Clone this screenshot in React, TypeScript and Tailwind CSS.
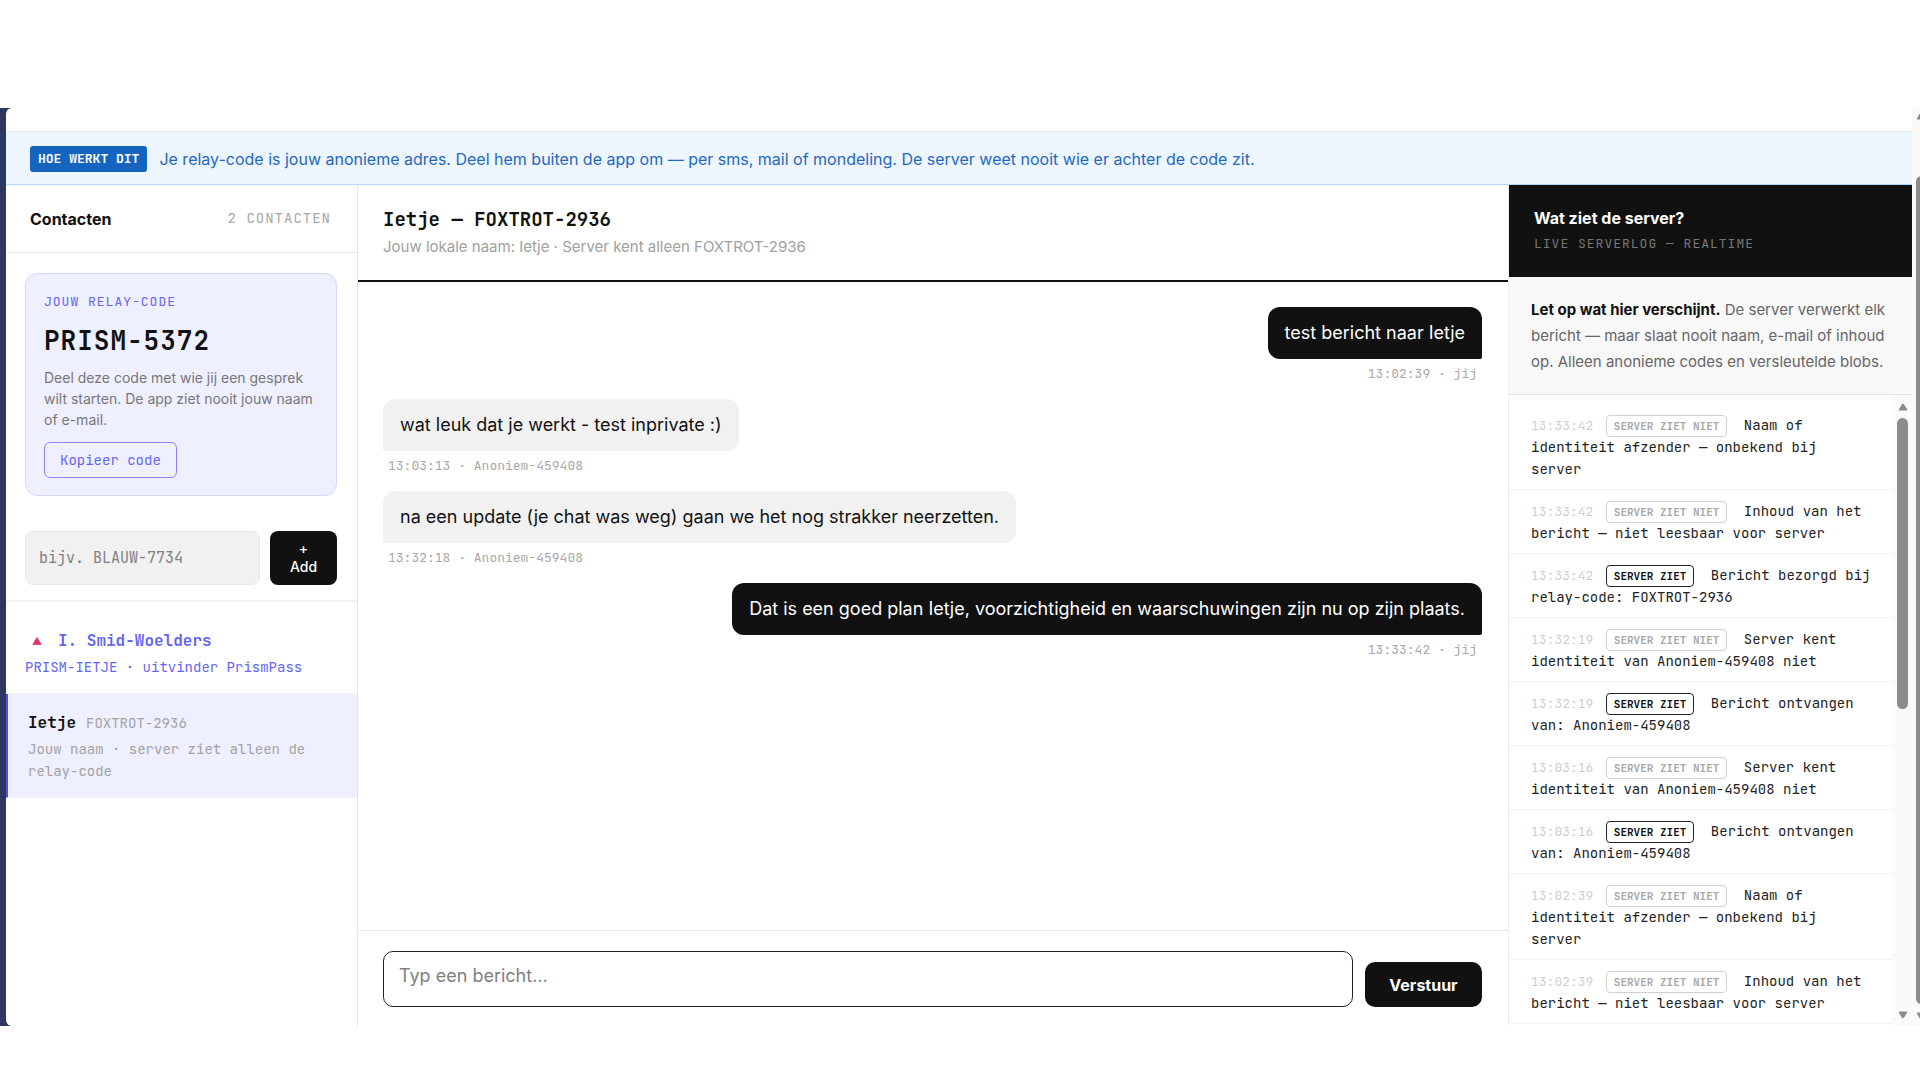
import React from "react";

const mono = "font-['JetBrains_Mono','DejaVu_Sans_Mono',monospace]";

type Message = { text: string; time: string; who: string; own: boolean };

const messages: Message[] = [
  { text: "test bericht naar Ietje", time: "13:02:39", who: "jij", own: true },
  { text: "wat leuk dat je werkt - test inprivate :)", time: "13:03:13", who: "Anoniem-459408", own: false },
  { text: "na een update (je chat was weg) gaan we het nog strakker neerzetten.", time: "13:32:18", who: "Anoniem-459408", own: false },
  { text: "Dat is een goed plan Ietje, voorzichtigheid en waarschuwingen zijn nu op zijn plaats.", time: "13:33:42", who: "jij", own: true },
];

type LogEntry = { time: string; seen: boolean; text: string };

const log: LogEntry[] = [
  { time: "13:33:42", seen: false, text: "Naam of identiteit afzender — onbekend bij server" },
  { time: "13:33:42", seen: false, text: "Inhoud van het bericht — niet leesbaar voor server" },
  { time: "13:33:42", seen: true, text: "Bericht bezorgd bij relay-code: FOXTROT-2936" },
  { time: "13:32:19", seen: false, text: "Server kent identiteit van Anoniem-459408 niet" },
  { time: "13:32:19", seen: true, text: "Bericht ontvangen van: Anoniem-459408" },
  { time: "13:03:16", seen: false, text: "Server kent identiteit van Anoniem-459408 niet" },
  { time: "13:03:16", seen: true, text: "Bericht ontvangen van: Anoniem-459408" },
  { time: "13:02:39", seen: false, text: "Naam of identiteit afzender — onbekend bij server" },
  { time: "13:02:39", seen: false, text: "Inhoud van het bericht — niet leesbaar voor server" },
];

function Arrow({ down = false }: { down?: boolean }) {
  return (
    <svg viewBox="0 0 10 8" className="h-2 w-2.5 shrink-0" aria-hidden="true">
      <path
        d={down ? "M1 1h8L5.6 6.6a.7.7 0 0 1-1.2 0z" : "M1 7h8L5.6 1.4a.7.7 0 0 0-1.2 0z"}
        fill="#8b8b8b"
        stroke="#8b8b8b"
        strokeLinejoin="round"
      />
    </svg>
  );
}

function Banner() {
  return (
    <div className="flex h-[53px] shrink-0 items-center gap-3 border-b border-[#b3d7f8] bg-[#edf5ff] px-6 pt-px">
      <span className={`${mono} rounded-[3px] bg-[#1565c0] px-2 text-[13px] leading-[26px] font-bold text-white`}>
        HOE WERKT DIT
      </span>
      <p className="text-base text-[#1f69c2]">
        Je relay-code is jouw anonieme adres. Deel hem buiten de app om — per sms, mail of mondeling. De server weet
        nooit wie er achter de code zit.
      </p>
    </div>
  );
}

function Sidebar() {
  return (
    <aside className="flex w-[352px] shrink-0 flex-col border-r border-[#e5e5e5]">
      <header className="flex h-[68px] items-center justify-between border-b border-[#ebebeb] pr-[26px] pl-6">
        <h2 className="text-base font-bold text-[#111]">Contacten</h2>
        <span className={`${mono} text-[14px] tracking-[1px] text-[#a8a8a8]`}>2 CONTACTEN</span>
      </header>

      <section className="mt-5 mr-5 ml-[19px] rounded-xl border border-[#d3d9fb] bg-[#eeefff] px-[18px] pt-[18px] pb-[17px]">
        <h3 className={`${mono} text-[13px] leading-5 tracking-[1px] text-[#6366f1]`}>JOUW RELAY-CODE</h3>
        <p className={`${mono} mt-[11px] text-[26px] leading-9 font-bold tracking-[1px] text-[#111]`}>PRISM-5372</p>
        <p className="mt-2 text-[14px] leading-[21px] text-[#777]">
          Deel deze code met wie jij een gesprek wilt starten. De app ziet nooit jouw naam of e-mail.
        </p>
        <button
          type="button"
          className={`${mono} mt-3 h-9 rounded-md border border-[#8285f4] px-[15px] text-[14px] text-[#6366f1]`}
        >
          Kopieer code
        </button>
      </section>

      <form
        className="mt-[35px] flex gap-2.5 border-b-2 border-[#f1f1f1] pr-5 pb-[15px] pl-[19px]"
        onSubmit={(e) => e.preventDefault()}
      >
        <input
          type="text"
          aria-label="Relay-code toevoegen"
          placeholder="bijv. BLAUW-7734"
          className={`${mono} h-[54px] min-w-0 flex-1 rounded-lg border border-[#e8e8e8] bg-[#f1f1f1] px-[13px] text-[15px] placeholder:text-[#808080]`}
        />
        <button type="submit" className="w-[67px] rounded-lg bg-[#111] px-5 text-[14px] leading-[18px] font-medium text-white">
          + Add
        </button>
      </form>

      <ul className={mono}>
        <li className="border-b border-[#f1f1f1] px-[19px] pt-[26px] pb-[15px] text-[#6366f1]">
          <div className="flex items-center gap-4 pl-[7px]">
            <svg viewBox="0 0 10 8" className="h-2 w-2.5" aria-hidden="true">
              <path d="M5 .6 9.2 7.4H.8z" fill="#e0326e" stroke="#e0326e" strokeWidth=".8" strokeLinejoin="round" />
            </svg>
            <span className="text-base leading-[26px] font-bold">I. Smid-Woelders</span>
          </div>
          <p className="mt-0.5 text-[14px] leading-[22px]">PRISM-IETJE · uitvinder PrismPass</p>
        </li>
        <li className="border-b border-l-2 border-b-[#f1f1f1] border-l-[#4f52e0] bg-[#eeefff] px-5 pt-4 pb-[15px]">
          <div className="flex items-baseline gap-2.5 leading-[26px]">
            <span className="text-base font-bold text-[#111]">Ietje</span>
            <span className="text-[14px] text-[#a3a3a3]">FOXTROT-2936</span>
          </div>
          <p className="mt-0.5 text-[14px] leading-[22px] text-[#a3a3a3]">Jouw naam · server ziet alleen de relay-code</p>
        </li>
      </ul>
    </aside>
  );
}

function Bubble({ message }: { message: Message }) {
  return (
    <div className={message.own ? "flex flex-col items-end" : "flex flex-col items-start"}>
      <p
        className={
          message.own
            ? "rounded-xl rounded-br-[2px] bg-[#111] px-[17px] py-3 text-[18px] leading-7 text-white"
            : "rounded-xl rounded-bl-[2px] bg-[#f1f1f1] px-[17px] py-3 text-[18px] leading-7 text-[#111]"
        }
      >
        {message.text}
      </p>
      <span className={`${mono} mt-[5px] px-[5px] text-[13px] leading-5 text-[#a8a8a8]`}>
        {message.time} · {message.who}
      </span>
    </div>
  );
}

function Chat() {
  return (
    <main className="flex min-w-0 flex-1 flex-col border-r border-[#eee]">
      <header className="h-[97px] shrink-0 border-b-2 border-[#111] px-[25px] pt-5">
        <h1 className={`${mono} text-[19px] leading-[30px] font-bold text-[#111]`}>Ietje — FOXTROT-2936</h1>
        <p className="text-[15px] leading-6 text-[#a0a0a0]">Jouw lokale naam: Ietje · Server kent alleen FOXTROT-2936</p>
      </header>
      <div className="flex min-h-0 flex-1 flex-col gap-[15px] overflow-hidden pt-[25px] pr-[26px] pl-[25px]">
        {messages.map((m) => (
          <Bubble key={m.time} message={m} />
        ))}
      </div>
      <form
        className="flex items-end gap-3 border-t border-[#e5e5e5] pt-5 pr-[26px] pb-[19px] pl-[25px]"
        onSubmit={(e) => e.preventDefault()}
      >
        <textarea
          aria-label="Bericht"
          placeholder="Typ een bericht..."
          className="h-14 min-w-0 flex-1 resize-none rounded-[10px] border border-[#222] px-[15px] py-3 text-[18px] leading-6 placeholder:text-[#808080]"
        />
        <button type="submit" className="h-[45px] w-[117px] rounded-[10px] bg-[#111] text-base font-bold text-white">
          Verstuur
        </button>
      </form>
    </main>
  );
}

function ServerPanel() {
  return (
    <aside className="flex w-[403px] shrink-0 flex-col">
      <header className="h-[92px] shrink-0 bg-[#111] px-[25px] pt-[19px]">
        <h2 className="text-base leading-7 font-bold text-white">Wat ziet de server?</h2>
        <p className={`${mono} text-[13px] leading-6 tracking-[1px] text-[#777]`}>LIVE SERVERLOG — REALTIME</p>
      </header>
      <p className="border-b border-[#e5e5e5] bg-[#f8f8f8] pt-5 pr-4 pb-[19px] pl-[22px] text-[15px] leading-[26px] text-[#666]">
        <strong className="font-bold text-[#111]">Let op wat hier verschijnt.</strong> De server verwerkt elk bericht —
        maar slaat nooit naam, e-mail of inhoud op. Alleen anonieme codes en versleutelde blobs.
      </p>
      <div className="flex min-h-0 flex-1">
        <ul className={`${mono} min-w-0 flex-1 overflow-hidden pt-[9px] text-[14px] leading-[22px] text-[#222]`}>
          {log.map((entry, i) => (
            <li key={i} className="border-b border-[#f3f3f3] pt-2.5 pr-[18px] pb-[9px] pl-[22px]">
              <time className="mr-1 text-[13px] leading-none text-[#cfcfcf]">{entry.time}</time>{" "}
              <span
                className={
                  entry.seen
                    ? "mr-2 rounded-[4px] border border-[#222] px-[7px] py-[3px] text-[11px] leading-none font-bold text-[#111]"
                    : "mr-2 rounded-[4px] border border-[#d0d0d0] px-[7px] py-[3px] text-[11px] leading-none font-bold text-[#a8a8a8]"
                }
              >
                {entry.seen ? "SERVER ZIET" : "SERVER ZIET NIET"}
              </span>{" "}
              {entry.text}
            </li>
          ))}
        </ul>
        <div className="flex w-[19px] flex-col items-center bg-[#fafafa] pt-2 pb-[7px]">
          <Arrow />
          <div className="mt-[7px] min-h-0 flex-1">
            <div className="h-[49%] w-[11px] rounded-full bg-[#8b8b8b]" />
          </div>
          <Arrow down />
        </div>
      </div>
    </aside>
  );
}

export default function App() {
  return (
    <div className="flex h-screen flex-col bg-white pt-27 pb-[54px] font-['Inter',sans-serif] text-[#111]">
      <div className="flex min-h-0 flex-1 bg-[#2d3860]">
        <div className="ml-1.5 flex min-w-0 flex-1 flex-col overflow-hidden rounded-l-md bg-white">
          <div className="h-6 shrink-0 border-b border-[#e8e8e8]" />
          <Banner />
          <div className="flex min-h-0 flex-1">
            <Sidebar />
            <Chat />
            <ServerPanel />
          </div>
        </div>
        <div className="flex w-2 shrink-0 flex-col items-start overflow-hidden bg-[#fafafa] pt-1 pb-1.5 pl-1">
          <Arrow />
          <div className="mt-14 mb-2 w-[11px] flex-1 rounded-full bg-[#8b8b8b]" />
          <Arrow down />
        </div>
      </div>
    </div>
  );
}
